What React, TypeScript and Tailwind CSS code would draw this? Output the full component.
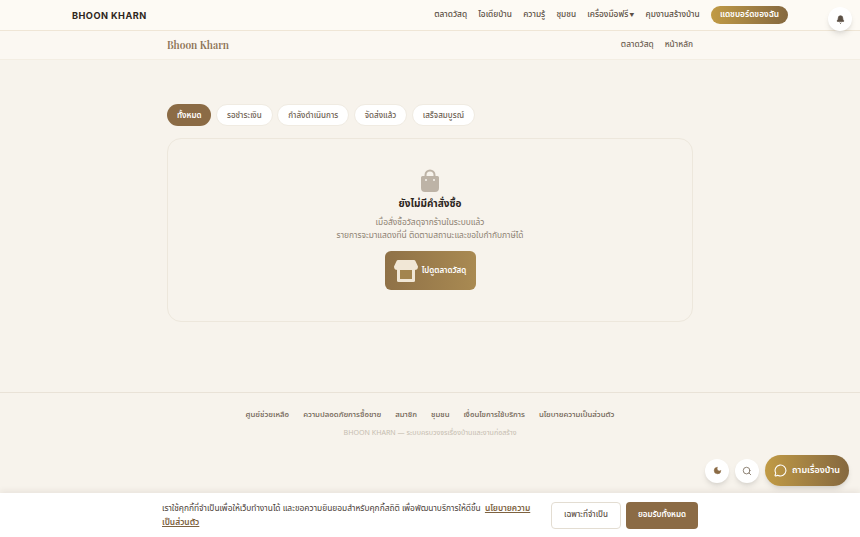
import { Bell, MessageCircle, Moon, Search } from "lucide-react";

const font = { fontFamily: '"Noto Sans Thai", Inter, "Noto Sans", sans-serif' };

const navItems = ["ตลาดวัสดุ", "ไอเดียบ้าน", "ความรู้", "ชุมชน"];
const tabs = ["ทั้งหมด", "รอชำระเงิน", "กำลังดำเนินการ", "จัดส่งแล้ว", "เสร็จสมบูรณ์"];
const footerLinks = [
  "ศูนย์ช่วยเหลือ",
  "ความปลอดภัยการซื้อขาย",
  "สมาชิก",
  "ชุมชน",
  "เงื่อนไขการใช้บริการ",
  "นโยบายความเป็นส่วนตัว",
];

function StoreIcon() {
  return (
    <svg width="24" height="24" viewBox="0 0 24 24" fill="none">
      <path d="M3 10h18v11.500a1.500 1.500 0 0 1-1.500 1.500h-15A1.500 1.500 0 0 1 3 21.500V10Z" fill="#f1e7d6" />
      <rect x="6" y="10" width="12" height="10" fill="#a3854f" />
      <path d="M4 1h16a1.500 1.500 0 0 1 1.300.8L24 7.500A3.500 3.500 0 0 1 20.500 11h-17A3.500 3.500 0 0 1 0 7.500L2.700 1.800A1.500 1.500 0 0 1 4 1Z" fill="#f1e7d6" />
    </svg>
  );
}

function BagIcon() {
  return (
    <svg width="24" height="24" viewBox="0 0 24 24" fill="none">
      <path d="M7.500 8V6a4.500 4.500 0 0 1 9 0v2" stroke="#bdb3a6" strokeWidth="2" />
      <path d="M3 8.500A1.500 1.500 0 0 1 4.500 7h15A1.500 1.500 0 0 1 21 8.500V19a4 4 0 0 1-4 4H7a4 4 0 0 1-4-4V8.500Z" fill="#bdb3a6" />
      <circle cx="8" cy="11" r="1" fill="#f7f3ec" />
      <circle cx="16" cy="11" r="1" fill="#f7f3ec" />
    </svg>
  );
}

export default function App() {
  return (
    <div style={font} className="relative h-[537px] w-[860px] overflow-hidden bg-[#f7f3ec] text-[#2b2420]">
      <header className="flex h-[31px] items-center justify-between border-b border-[#efe6d6] bg-[#fdfaf4] px-[72px]">
        <span className="pt-[1px] font-['Inter'] text-[9.2px] font-bold tracking-[0.05em] text-[#2e2620]">BHOON KHARN</span>
        <nav className="flex items-center gap-[11.2px] text-[8.3px] font-medium text-[#5c5045]">
          {navItems.map((item) => (
            <span key={item} className="pt-[1px]">{item}</span>
          ))}
          <span className="flex items-center gap-[1px] pt-[1px]">
            เครื่องมือฟรี<span className="text-[5px]">▼</span>
          </span>
          <span className="pt-[1px]">คุมงานสร้างบ้าน</span>
          <span className="rounded-full bg-gradient-to-r from-[#c19b45] to-[#85683f] px-[9px] py-[3px] font-semibold text-white">
            แดชบอร์ดของฉัน
          </span>
        </nav>
      </header>
      <div className="absolute right-[8px] top-[7px] flex h-[24px] w-[24px] items-center justify-center rounded-full bg-white shadow-md">
        <Bell size={9} fill="#5c5045" stroke="#5c5045" />
      </div>

      <div className="flex h-[29px] items-center justify-between border-b border-[#f3eee3] bg-[#fbf8f2] px-[167px]">
        <span className="pt-[2px] font-['Playfair_Display','Liberation_Serif',serif] text-[10.2px] font-semibold text-[#8d7355]">Bhoon Kharn</span>
        <div className="flex gap-[11px] pt-[1px] text-[8.3px] font-medium text-[#6e6152]">
          <span>ตลาดวัสดุ</span>
          <span>หน้าหลัก</span>
        </div>
      </div>

      <main className="mx-[167px] pt-[44px]">
        <div className="flex gap-[4.5px]">
          {tabs.map((tab, i) => (
            <span
              key={tab}
              className={
                i === 0
                  ? "flex h-[22px] items-center rounded-full bg-[#8b6b45] px-[10px] pt-[2px] text-[8px] font-semibold text-white"
                  : "flex h-[22px] items-center rounded-full border border-[#f0ebe2] bg-white px-[10px] pt-[2px] text-[8px] font-medium text-[#6e6152]"
              }
            >
              {tab}
            </span>
          ))}
        </div>
        <div className="mt-[12px] flex h-[184px] flex-col items-center rounded-[14px] border border-[#ede7dc] pt-[30px]">
          <BagIcon />
          <h2 className="mt-[1px] text-[10px] font-bold leading-[20px] text-[#2b2420]">ยังไม่มีคำสั่งซื้อ</h2>
          <p className="mt-[2px] text-center text-[8.4px] leading-[13px] text-[#8d8172]">
            เมื่อสั่งซื้อวัสดุจากร้านในระบบแล้ว
            <br />
            รายการจะมาแสดงที่นี่ ติดตามสถานะและขอใบกำกับภาษีได้
          </p>
          <div className="mt-[9px] flex h-[39px] w-[91px] items-center justify-center gap-[4px] rounded-[6px] bg-gradient-to-r from-[#8f7147] to-[#a98a52] text-[8px] font-semibold text-white">
            <StoreIcon />
            <span className="pt-[1px]">ไปดูตลาดวัสดุ</span>
          </div>
        </div>
      </main>

      <footer className="mt-[70px] flex flex-col items-center border-t border-[#e9e2d7] pt-[17px]">
        <div className="flex gap-[14px] text-[7.8px] font-medium text-[#6e6152]">
          {footerLinks.map((link) => (
            <span key={link}>{link}</span>
          ))}
        </div>
        <p className="mt-[6px] text-[7.1px] text-[#c6bdb0]">BHOON KHARN — ระบบครบวงจรเรื่องบ้านและงานก่อสร้าง</p>
      </footer>

      <div className="absolute bottom-[51px] right-[11px] flex items-center gap-[6px]">
        <div className="flex h-[24px] w-[24px] items-center justify-center rounded-full bg-white shadow-md">
          <Moon size={9} fill="#8b6b45" stroke="#8b6b45" strokeWidth={1} />
        </div>
        <div className="flex h-[24px] w-[24px] items-center justify-center rounded-full bg-white shadow-md">
          <Search size={10} stroke="#7a6c5c" />
        </div>
        <div className="flex h-[31px] w-[84px] items-center justify-center gap-[5px] rounded-full bg-gradient-to-r from-[#c19b45] to-[#85683f] text-[9px] font-semibold text-white shadow-md">
          <MessageCircle size={13} />
          ถามเรื่องบ้าน
        </div>
      </div>

      <div className="absolute bottom-0 left-0 right-0 flex h-[44px] items-center justify-between bg-white px-[162px] shadow-[0_-2px_6px_rgba(60,40,20,0.08)]">
        <p className="w-[372px] pt-[1px] text-[8.4px] leading-[14px] text-[#4a4037]">
          เราใช้คุกกี้ที่จำเป็นเพื่อให้เว็บทำงานได้ และขอความยินยอมสำหรับคุกกี้สถิติ เพื่อพัฒนาบริการให้ดีขึ้น{" "}
          <span className="ml-[2px] font-semibold text-[#7d6240] underline">นโยบายความเป็นส่วนตัว</span>
        </p>
        <div className="flex gap-[5px]">
          <span className="flex h-[27px] w-[70px] items-center justify-center rounded-[4px] border border-[#e3ddd2] bg-white text-[8px] font-medium text-[#5c5045]">
            เฉพาะที่จำเป็น
          </span>
          <span className="flex h-[27px] w-[72px] items-center justify-center rounded-[4px] bg-[#8b6b45] text-[8px] font-semibold text-white">
            ยอมรับทั้งหมด
          </span>
        </div>
      </div>
    </div>
  );
}
